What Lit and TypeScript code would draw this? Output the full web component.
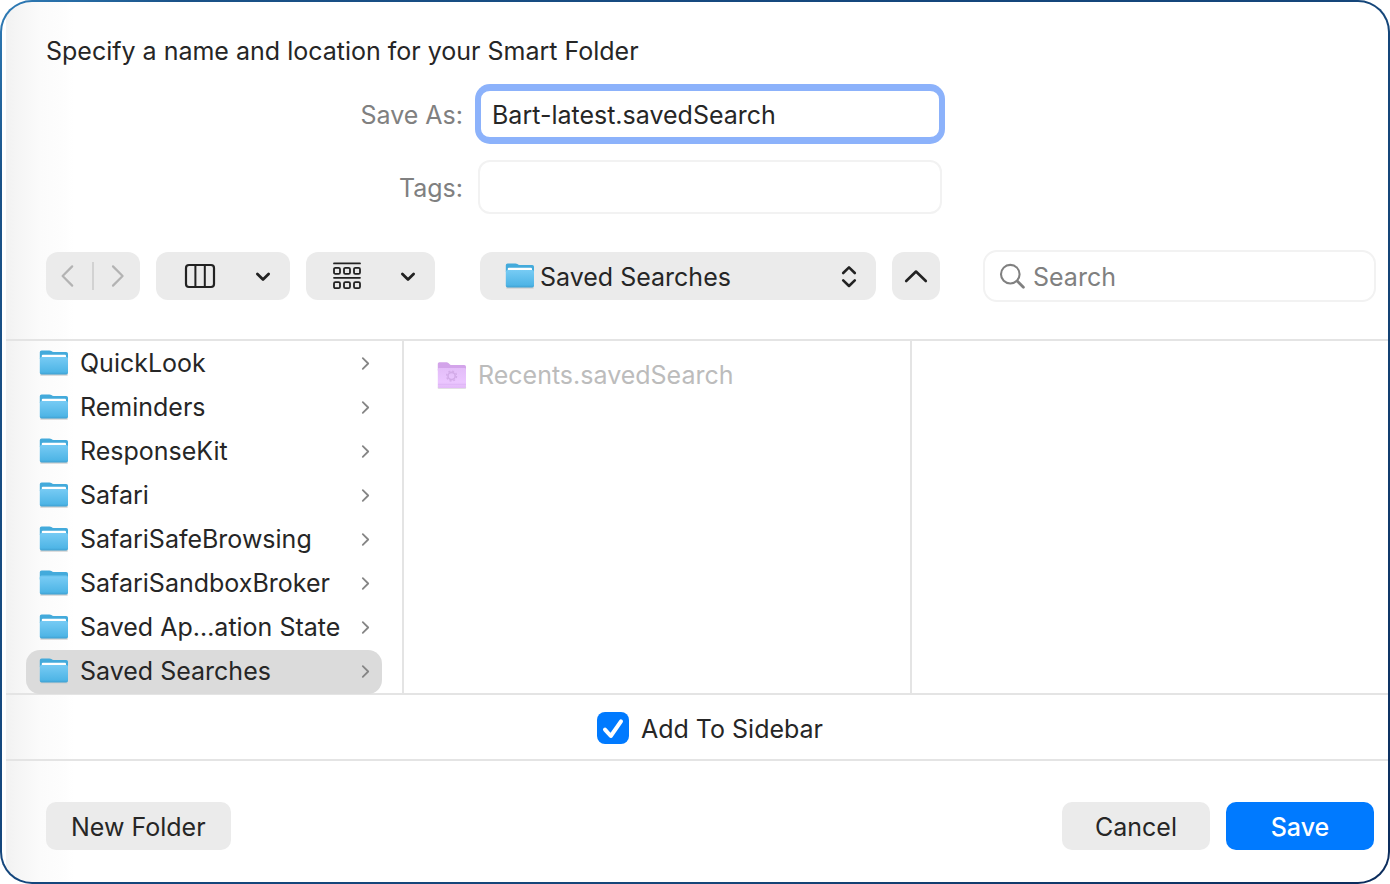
import { LitElement, html, css, svg } from "lit";
import { customElement, property, state } from "lit/decorators.js";
import { classMap } from "lit/directives/class-map.js";

@customElement("folder-icon")
class FolderIcon extends LitElement {
  @property() kind: "plain" | "empty" | "smart" = "plain";

  static styles = css`
    :host { display: block; width: 30px; height: 28px; flex: none; }
    svg { display: block; }
  `;

  render() {
    if (this.kind === "smart") {
      return html`<svg width="30" height="28" viewBox="0 -.6 30 28" aria-hidden="true">
        <defs>
          <linearGradient id="p" x1="0" y1="0" x2="0" y2="1">
            <stop offset="0" stop-color="#e3bdf8" /><stop offset=".7" stop-color="#ebc6ff" /><stop offset="1" stop-color="#e2b9f8" />
          </linearGradient>
        </defs>
        <path d="M1.6 26.2H28.2" stroke="#d9d3dc" stroke-width="2" stroke-linecap="round" />
        <path d="M.8 9V2.2Q.8.6 2.4.6H9.6Q10.6.6 11.4 1.4L13 2.9Q13.6 3.4 14.6 3.4H27.2Q29 3.4 29 5.2V9Z" fill="#d3a4ea" />
        <path d="M.8 7.8Q.8 6.4 2.2 6.4H27.6Q29 6.4 29 7.8V24.6Q29 26.4 27.2 26.4H2.6Q.8 26.4.8 24.6Z" fill="url(#p)" />
        <path d="M1 22.8H29" stroke="#ddb3f3" stroke-width=".7" />
        <circle cx="14.6" cy="14.4" r="3.6" fill="none" stroke="#d3abe8" stroke-width="1.6" />
        <circle cx="14.6" cy="14.4" r="5" fill="none" stroke="#d3abe8" stroke-width="1.3" stroke-dasharray="1.96 1.96" />
      </svg>`;
    }
    return html`<svg width="30" height="28" viewBox="0 0 30 28" aria-hidden="true">
      <defs>
        <linearGradient id="b" x1="0" y1="0" x2="0" y2="1">
          <stop offset="0" stop-color="#77cbf4" /><stop offset=".85" stop-color="#4fb5e6" /><stop offset="1" stop-color="#3d9fd0" />
        </linearGradient>
      </defs>
      <path d="M2 25.8H28" stroke="#d2d2d2" stroke-width="1.8" stroke-linecap="round" />
      <path d="M.8 10V3.2Q.8 1.4 2.6 1.4H10.4Q11.6 1.4 12.4 2.1Q13.4 3 14.6 3H27.2Q29 3 29 4.8V10Z" fill="#43aadb" />
      ${this.kind === "empty"
        ? svg`<path d="M.8 8.4Q.8 6.6 2.6 6.6H27.2Q29 6.6 29 8.4V11H.8Z" fill="#6fc6f0" />`
        : svg`<path d="M2.8 11V6.8Q2.8 5.8 3.8 5.8H26Q27 5.8 27 6.8V11Z" fill="#fff" />`}
      <path d="M.8 9.8Q.8 8 2.6 8H27.2Q29 8 29 9.8V23.8Q29 25.6 27.2 25.6H2.6Q.8 25.6.8 23.8Z" fill="url(#b)" />
    </svg>`;
  }
}

interface Item {
  name: string;
  kind?: "plain" | "empty" | "smart";
}

const FOLDERS: Item[] = [
  { name: "QuickLook" },
  { name: "Reminders" },
  { name: "ResponseKit" },
  { name: "Safari" },
  { name: "SafariSafeBrowsing" },
  { name: "SafariSandboxBroker", kind: "empty" },
  { name: "Saved Ap…ation State" },
  { name: "Saved Searches" },
];

@customElement("app-root")
class AppRoot extends LitElement {
  @state() private selected = "Saved Searches";

  static styles = css`
    :host {
      display: block;
      font-family: Inter, "Liberation Sans", sans-serif;
      font-size: 25px;
      line-height: 32px;
      color: #262626;
    }
    * { box-sizing: border-box; }
    button, input, select {
      font: inherit;
      color: inherit;
      margin: 0;
      padding: 0;
      border: 0;
      outline: 0;
      background: none;
    }
    svg { display: block; flex: none; }

    .frame {
      min-height: 100vh;
      padding: 2px;
      display: flex;
      border-radius: 32px;
      background: linear-gradient(135deg, #2f7db8 0, #1a5288 8%, #14467c 40%, #154679 70%, #0b2c5c 100%);
    }
    .window {
      flex: 1;
      min-width: 0;
      padding-left: 4px;
      display: flex;
      flex-direction: column;
      border-radius: 30px;
      overflow: hidden;
      background:
        linear-gradient(90deg, #fff 4px, #f2f2f2 4px, #f6f6f6 18px, #fbfbfb 38px, #fdfdfd 60px, #fff 72px);
    }

    .fields {
      padding: 33px 14px 0 40px;
      display: flex;
      flex-direction: column;
    }
    .title { margin: 0 0 20px; font-size: inherit; font-weight: 400; }
    .field {
      display: grid;
      grid-template-columns: 1fr 464px 1fr;
      align-items: center;
    }
    .field + .field { margin-top: 19px; }
    .field label { justify-self: end; padding: 2px 15px 0 0; color: #808080; }
    .text {
      width: 100%;
      height: 54px;
      padding: 2px 12px 0;
      border: 2px solid #f2f2f2;
      border-radius: 12px;
      background: #fff;
    }
    .focused {
      padding: 2px 11px 0;
      border: 3px solid #8cb2fb;
      border-width: 4px 3px;
      box-shadow: 0 0 0 3px #8cb2fb;
    }

    .toolbar {
      padding: 36px 14px 37px 40px;
      display: grid;
      grid-template-columns: minmax(0, 1fr) 460px minmax(0, 1fr);
      align-items: center;
    }
    .group { display: flex; align-items: center; gap: 16px; }
    .pill {
      height: 48px;
      display: flex;
      align-items: center;
      border-radius: 12px;
      background: #ebebeb;
    }
    .nav { width: 94px; }
    .nav button { flex: 1; height: 100%; display: grid; place-items: center; }
    .nav .rule { width: 2px; height: 28px; background: #d2d2d2; }
    .view { width: 134px; justify-content: space-between; padding: 0 18px 0 28px; }
    .arrange { width: 129px; justify-content: space-between; padding: 0 18px 0 26px; }
    .up { width: 48px; justify-content: center; }
    .popup { position: relative; flex: 1; }
    .popup select {
      appearance: none;
      width: 100%;
      height: 48px;
      padding: 2px 48px 0 60px;
      border-radius: 12px;
    }
    .popup folder-icon { position: absolute; left: 25px; top: 10px; pointer-events: none; }
    .popup .updown { position: absolute; right: 18px; top: 12px; pointer-events: none; }
    .search {
      margin: 0 -2px 0 43px;
      height: 52px;
      padding: 0 14px;
      display: flex;
      align-items: center;
      gap: 6px;
      border: 2px solid #f2f2f2;
      border-radius: 14px;
      background: #fff;
    }
    .search input { flex: 1; min-width: 0; padding-top: 2px; }
    .search input::placeholder { color: #808080; opacity: 1; }

    .browser {
      flex: 1;
      display: grid;
      grid-template-columns: 398px 508px 1fr;
      border-top: 2px solid #e4e4e4;
      border-bottom: 2px solid #e4e4e4;
    }
    .column {
      margin: 0;
      padding: 1px 20px 0;
      list-style: none;
    }
    .column + .column { padding-top: 13px; }
    .divided { border-right: 2px solid #e4e4e4; }
    .first { margin-bottom: -1px; }
    .row {
      width: 100%;
      height: 44px;
      padding: 0 12px 2px 13px;
      display: flex;
      align-items: center;
      gap: 11px;
      border-radius: 14px;
      text-align: left;
    }
    .row span { flex: 1; min-width: 0; white-space: nowrap; }
    .chosen { background: #dbdbdb; }
    .dimmed { color: #bcbcbc; }

    .option {
      padding: 16px 14px 14px 40px;
      display: flex;
      justify-content: center;
      border-bottom: 2px solid #e4e4e4;
    }
    .check { display: grid; grid-template-columns: 32px auto; column-gap: 12px; align-items: center; }
    .check input { appearance: none; grid-area: 1 / 1; width: 32px; height: 32px; border-radius: 8px; background: #fff; box-shadow: inset 0 0 0 1px #c8c8c8; }
    .check input:checked { background: #007aff; box-shadow: none; }
    .check svg { grid-area: 1 / 1; pointer-events: none; }
    .check span { padding-top: 2px; }

    .actions {
      padding: 41px 14px 32px 40px;
      display: flex;
      gap: 16px;
    }
    .button {
      height: 48px;
      min-width: 148px;
      padding: 2px 25px 0;
      border-radius: 10px;
      background: #ebebeb;
    }
    .spacer { flex: 1; }
    .primary { background: #007aff; color: #fff; font-weight: 500; }
  `;

  private chevron(d: string, w: number, h: number, color: string, width: number, cls = "") {
    return html`<svg class=${cls} width=${w} height=${h} viewBox="0 0 ${w} ${h}" fill="none" stroke=${color}
      stroke-width=${width} stroke-linecap="round" stroke-linejoin="round" aria-hidden="true"><path d=${d} /></svg>`;
  }

  private renderFolder(item: Item) {
    const chosen = item.name === this.selected;
    return html`<li>
      <button class=${classMap({ row: true, chosen })} @click=${() => (this.selected = item.name)}>
        <folder-icon kind=${item.kind ?? "plain"}></folder-icon>
        <span>${item.name}</span>
        ${this.chevron("M2.8 3.2L8.2 8.5L2.8 13.8", 10, 17, "#858585", 1.8)}
      </button>
    </li>`;
  }

  render() {
    return html`<div class="frame"><main class="window">
      <section class="fields">
        <h1 class="title">Specify a name and location for your Smart Folder</h1>
        <div class="field">
          <label for="name">Save As:</label>
          <input id="name" class="text focused" type="text" value="Bart-latest.savedSearch" spellcheck="false" />
        </div>
        <div class="field">
          <label for="tags">Tags:</label>
          <input id="tags" class="text" type="text" />
        </div>
      </section>

      <div class="toolbar">
        <div class="group">
          <div class="pill nav">
            <button aria-label="Back" disabled>${this.chevron("M11.2 2.4L1.6 12L11.2 21.6", 16, 24, "#b3b3b3", 2.2)}</button>
            <span class="rule"></span>
            <button aria-label="Forward" disabled>${this.chevron("M4 2.4L13.6 12L4 21.6", 16, 24, "#b3b3b3", 2.2)}</button>
          </div>
          <button class="pill view" aria-label="View as columns" aria-haspopup="menu">
            <svg width="32" height="26" viewBox="0 0 32 26" fill="none" stroke="#222" aria-hidden="true">
              <rect x="2" y="2" width="28" height="22" rx="3" stroke-width="2.2" />
              <path d="M11.4 2V24M20.8 2V24" stroke-width="2" />
            </svg>
            ${this.chevron("M3.4 4L9 9.4L14.6 4", 18, 12, "#222", 2.8)}
          </button>
          <button class="pill arrange" aria-label="Group items" aria-haspopup="menu">
            <svg width="30" height="28" viewBox="0 0 30 28" fill="none" stroke="#222" stroke-width="1.8" stroke-linecap="round" aria-hidden="true">
              <path d="M2 1.4H28M2 15.8H28" />
              <rect x="2" y="5.8" width="6" height="6" rx="1.4" /><rect x="12" y="5.8" width="6" height="6" rx="1.4" /><rect x="22" y="5.8" width="6" height="6" rx="1.4" />
              <rect x="2" y="20.2" width="6" height="6" rx="1.4" /><rect x="12" y="20.2" width="6" height="6" rx="1.4" /><rect x="22" y="20.2" width="6" height="6" rx="1.4" />
            </svg>
            ${this.chevron("M3.4 4L9 9.4L14.6 4", 18, 12, "#222", 2.8)}
          </button>
        </div>
        <div class="group">
          <div class="pill popup">
            <select aria-label="Location"><option>Saved Searches</option></select>
            <folder-icon></folder-icon>
            ${this.chevron("M3.2 9L9 3.4L14.8 9M3.2 16.4L9 22L14.8 16.4", 18, 24, "#222", 2.6, "updown")}
          </div>
          <button class="pill up" aria-label="Collapse">${this.chevron("M2.2 12L12 2.5L21.8 12", 24, 14, "#222", 2.6)}</button>
        </div>
        <div class="search">
          <svg width="28" height="28" viewBox="0 0 28 28" fill="none" stroke="#808080" stroke-width="2.1" stroke-linecap="round" aria-hidden="true">
            <circle cx="11.3" cy="12.2" r="9.3" /><path d="M18.2 19.1L24.4 25.3" stroke-width="2.8" />
          </svg>
          <input type="text" placeholder="Search" aria-label="Search" />
        </div>
      </div>

      <section class="browser">
        <ul class="column divided first">${FOLDERS.map((f) => this.renderFolder(f))}</ul>
        <ul class="column divided">
          <li class="row dimmed"><folder-icon kind="smart"></folder-icon><span>Recents.savedSearch</span></li>
        </ul>
        <div class="column"></div>
      </section>

      <div class="option">
        <label class="check" for="sidebar">
          <input id="sidebar" type="checkbox" checked />
          <svg width="32" height="32" viewBox="0 0 32 32" fill="none" stroke="#fff" stroke-width="4" stroke-linecap="round" stroke-linejoin="round" aria-hidden="true">
            <path d="M8 17.6L13.8 24L24 9.4" />
          </svg>
          <span>Add To Sidebar</span>
        </label>
      </div>

      <footer class="actions">
        <button class="button">New Folder</button>
        <span class="spacer"></span>
        <button class="button">Cancel</button>
        <button class="button primary">Save</button>
      </footer>
    </main></div>`;
  }
}
